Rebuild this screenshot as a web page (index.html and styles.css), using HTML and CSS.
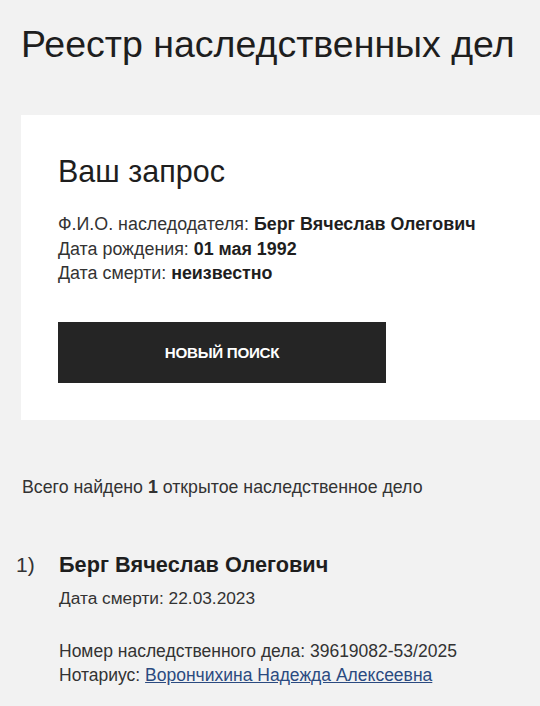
FILE: index.html
```html
<!DOCTYPE html>
<html lang="ru">
<head>
<meta charset="utf-8">
<link rel="stylesheet" href="styles.css">
</head>
<body>
<div class="page">
  <h1 class="title">Реестр наследственных дел</h1>
  <section class="card">
    <h2 class="card-title">Ваш запрос</h2>
    <div class="query">
      <div>Ф.И.О. наследодателя: <b>Берг Вячеслав Олегович</b></div>
      <div>Дата рождения: <b>01 мая 1992</b></div>
      <div>Дата смерти: <b>неизвестно</b></div>
    </div>
    <button class="btn">НОВЫЙ ПОИСК</button>
  </section>
  <p class="found">Всего найдено <b>1</b> открытое наследственное дело</p>
  <div class="result">
    <div class="num">1)</div>
    <div class="info">
      <div class="name">Берг Вячеслав Олегович</div>
      <div class="death">Дата смерти: 22.03.2023</div>
      <div class="case">
        <div>Номер наследственного дела: 39619082-53/2025</div>
        <div>Нотариус: <a href="#" class="link">Ворончихина Надежда Алексеевна</a></div>
      </div>
    </div>
  </div>
</div>
</body>
</html>
```
FILE: styles.css
```css
html, body {
  margin: 0;
  padding: 0;
  background: #f2f2f2;
  overflow: hidden;
}
body {
  font-family: "Liberation Sans", Arial, sans-serif;
  color: #222;
}
.page {
  padding: 0 0 0 21px;
}
.title {
  margin: 0;
  padding-top: 21px;
  font-size: 37.5px;
  line-height: 46px;
  font-weight: 400;
  color: #1e1e1e;
  white-space: nowrap;
}
.card {
  margin-top: 48px;
  background: #fff;
  height: 305px;
  box-sizing: border-box;
  padding: 38px 0 0 37px;
}
.card-title {
  margin: 0;
  font-size: 30.5px;
  line-height: 36px;
  font-weight: 400;
  color: #1e1e1e;
}
.query {
  margin-top: 23px;
  font-size: 17.85px;
  line-height: 24.5px;
  color: #333;
  white-space: nowrap;
}
.query b {
  color: #1e1e1e;
}
.btn {
  margin-top: 36px;
  width: 328px;
  height: 61px;
  padding: 0;
  border: 0;
  background: #252525;
  color: #fff;
  font-family: "Liberation Sans", Arial, sans-serif;
  font-weight: 700;
  font-size: 15.2px;
  letter-spacing: -0.3px;
  display: block;
}
.found {
  margin: 55px 0 0 1px;
  font-size: 17.75px;
  line-height: 24px;
  color: #333;
}
.result {
  margin-top: 52px;
  display: flex;
}
.num {
  width: 43px;
  margin-left: -5px;
  font-size: 21px;
  line-height: 28px;
  color: #333;
}
.info {
  flex: 1;
}
.name {
  font-size: 21.7px;
  line-height: 28px;
  font-weight: 700;
  color: #1e1e1e;
}
.death {
  margin-top: 7px;
  font-size: 17.3px;
  line-height: 24px;
  color: #333;
}
.case {
  margin-top: 29px;
  font-size: 17.5px;
  line-height: 24px;
  color: #333;
  white-space: nowrap;
}
.link {
  color: #2b4a80;
  text-decoration: underline;
}
```
